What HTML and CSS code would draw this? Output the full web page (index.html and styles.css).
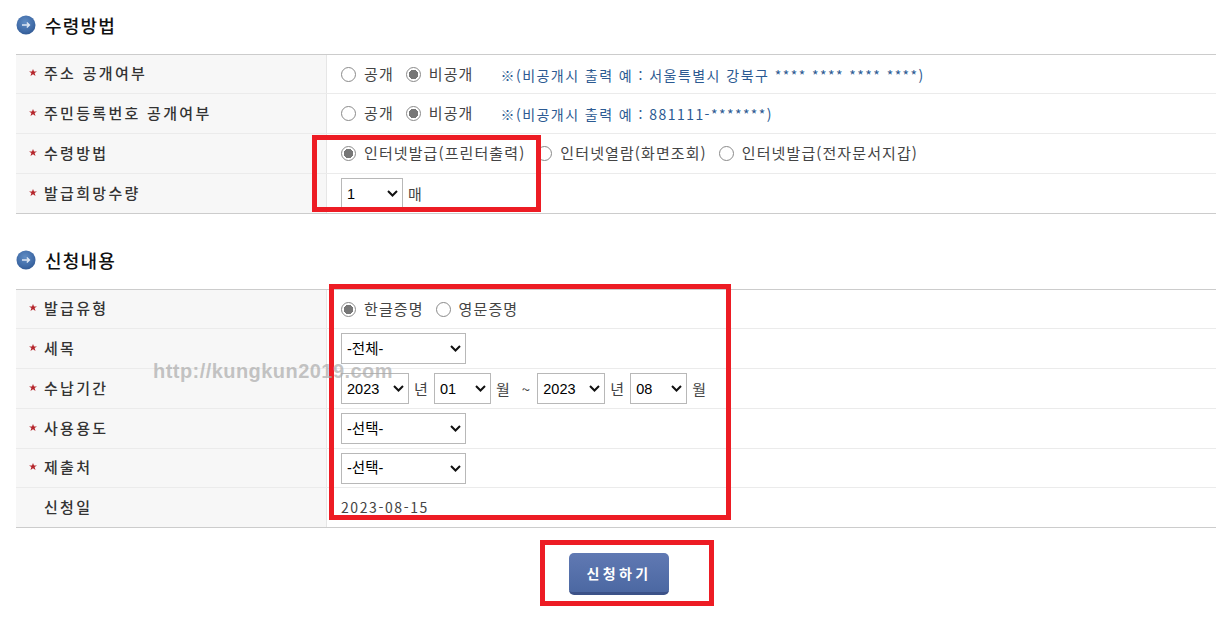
FILE: index.html
```html
<!DOCTYPE html>
<html lang="ko">
<head>
<meta charset="utf-8">
<title>납세증명 신청</title>
<link rel="stylesheet" href="styles.css">
</head>
<body>
<svg class="defs" width="0" height="0" aria-hidden="true">
  <defs>
    <radialGradient id="ball" cx="45%" cy="35%" r="70%">
      <stop offset="0" stop-color="#5f8cc4"/>
      <stop offset="0.7" stop-color="#3f6aa6"/>
      <stop offset="1" stop-color="#2f5690"/>
    </radialGradient>
    <symbol id="bullet" viewBox="0 0 20 20">
      <circle cx="10" cy="10" r="9.5" fill="url(#ball)"/>
      <path d="M6 10H13M10.8 7.6L13.4 10L10.8 12.4" fill="none" stroke="#dfe8f4" stroke-width="1.4"/>
    </symbol>
    <symbol id="star" viewBox="0 0 8 7">
      <path d="M4 0L5 2.4H8L5.6 4.1L6.5 7L4 5.3L1.5 7L2.4 4.1L0 2.4H3Z" fill="#b5252b"/>
    </symbol>
  </defs>
</svg>
<main class="page">
  <section class="section first">
    <h2 class="heading"><svg class="bullet"><use href="#bullet"/></svg>수령방법</h2>
    <div class="table">
      <div class="row short">
        <div class="label"><svg class="star"><use href="#star"/></svg>주소 공개여부</div>
        <div class="value">
          <label class="opt"><input type="radio" name="addr">공개</label>
          <label class="opt"><input type="radio" name="addr" checked>비공개</label>
          <span class="hint">※(비공개시 출력 예 : 서울특별시 강북구 **** **** **** ****)</span>
        </div>
      </div>
      <div class="row">
        <div class="label"><svg class="star"><use href="#star"/></svg>주민등록번호 공개여부</div>
        <div class="value">
          <label class="opt"><input type="radio" name="rrn">공개</label>
          <label class="opt"><input type="radio" name="rrn" checked>비공개</label>
          <span class="hint">※(비공개시 출력 예 : 881111-*******)</span>
        </div>
      </div>
      <div class="row">
        <div class="label"><svg class="star"><use href="#star"/></svg>수령방법</div>
        <div class="value">
          <label class="opt"><input type="radio" name="recv" checked>인터넷발급(프린터출력)</label>
          <label class="opt"><input type="radio" name="recv">인터넷열람(화면조회)</label>
          <label class="opt"><input type="radio" name="recv">인터넷발급(전자문서지갑)</label>
        </div>
      </div>
      <div class="row">
        <div class="label"><svg class="star"><use href="#star"/></svg>발급희망수량</div>
        <div class="value tight">
          <select class="sel qty"><option>1</option></select><span>매</span>
        </div>
      </div>
    </div>
  </section>

  <section class="section second">
    <h2 class="heading"><svg class="bullet"><use href="#bullet"/></svg>신청내용</h2>
    <div class="table">
      <div class="row short">
        <div class="label"><svg class="star"><use href="#star"/></svg>발급유형</div>
        <div class="value">
          <label class="opt"><input type="radio" name="kind" checked>한글증명</label>
          <label class="opt"><input type="radio" name="kind">영문증명</label>
        </div>
      </div>
      <div class="row">
        <div class="label"><svg class="star"><use href="#star"/></svg>세목</div>
        <div class="value"><select class="sel wide"><option>-전체-</option></select></div>
      </div>
      <div class="row">
        <div class="label"><svg class="star"><use href="#star"/></svg>수납기간</div>
        <div class="value tight">
          <select class="sel year"><option>2023</option></select><span>년</span>
          <select class="sel month"><option>01</option></select><span>월</span>
          <span class="tilde">~</span>
          <select class="sel year"><option>2023</option></select><span>년</span>
          <select class="sel month"><option>08</option></select><span>월</span>
        </div>
      </div>
      <div class="row">
        <div class="label"><svg class="star"><use href="#star"/></svg>사용용도</div>
        <div class="value"><select class="sel wide"><option>-선택-</option></select></div>
      </div>
      <div class="row short">
        <div class="label"><svg class="star"><use href="#star"/></svg>제출처</div>
        <div class="value"><select class="sel wide"><option>-선택-</option></select></div>
      </div>
      <div class="row">
        <div class="label nostar">신청일</div>
        <div class="value date">2023-08-15</div>
      </div>
    </div>
  </section>

  <div class="actions"><button class="submit" type="button">신청하기</button></div>

  <div class="mark mark-a"></div>
  <div class="mark mark-b"></div>
  <div class="mark mark-c"></div>
  <div class="watermark">http://kungkun2019.com</div>
</main>
</body>
</html>
```
FILE: styles.css
```css
* { box-sizing: border-box; }
html, body { margin: 0; padding: 0; background: #fff; overflow: hidden; }
body {
  font-family: "Noto Sans CJK KR", "Noto Sans", sans-serif;
  font-size: 14px;
  color: #444;
}
.defs { position: absolute; }
.page { position: relative; width: 1228px; height: 630px; padding: 0 12px 0 16px; }
.section.second { margin-top: 21px; }
.heading {
  display: flex;
  align-items: center;
  height: 54px;
  margin: 0;
  font-size: 18px;
  font-weight: 500;
  letter-spacing: 1.2px;
  color: #111;
  gap: 9px;
  padding-bottom: 5px;
}
.bullet { width: 20px; height: 20px; flex: none; margin-top: 1px; }
.table { border-top: 1px solid #ccc; border-bottom: 1px solid #ccc; }
.row {
  display: grid;
  grid-template-columns: 311px 1fr;
  height: 40px;
  border-bottom: 1px solid #ebebeb;
}
.row.short { height: 39px; }
.row:last-child { height: 39px; border-bottom: 0; }
.label {
  display: flex;
  align-items: center;
  padding: 0 0 3px 13px;
  background: #f7f7f7;
  border-right: 1px solid #e6e6e6;
  font-size: 15px;
  font-weight: 500;
  letter-spacing: 2.3px;
  color: #333;
}
.label.nostar { padding-left: 28px; }
.star { width: 8px; height: 7px; margin-right: 7px; flex: none; }
.value {
  display: flex;
  align-items: center;
  gap: 12px;
  padding-left: 14px;
  font-size: 15px;
  letter-spacing: 1.1px;
  color: #444;
}
.value.tight { gap: 5px; }
.opt { display: flex; align-items: center; gap: 8px; white-space: nowrap; padding-bottom: 2px; }
.opt input {
  appearance: none;
  width: 15px;
  height: 15px;
  margin: 2px 0 0;
  border: 1.3px solid #8a8a8a;
  border-radius: 50%;
  background: #fff;
}
.opt input:checked { background: radial-gradient(circle, #777 0 4.5px, #fff 5px); }
.hint { margin-left: 15px; color: #2c5a92; letter-spacing: 1.45px; padding-top: 1px; font-size: 14px; }
.sel {
  appearance: none;
  height: 31px;
  padding: 0 0 0 5px;
  border: 1px solid #b8b8b8;
  border-radius: 0;
  background: #fff url("data:image/svg+xml,%3Csvg xmlns='http://www.w3.org/2000/svg' width='11' height='7'%3E%3Cpath d='M1 1l4.5 4.5L10 1' fill='none' stroke='%23111' stroke-width='2'/%3E%3C/svg%3E") no-repeat right 4px center;
  font-family: "Liberation Sans", "Noto Sans CJK KR", sans-serif;
  font-size: 14.5px;
  letter-spacing: 0;
  color: #000;
}
.wide { width: 125px; }
.qty { width: 62px; }
.year { width: 68px; }
.month { width: 57px; }
.tilde { margin: 0 1px 0 6px; }
.value.date { font-size: 14px; letter-spacing: 1.6px; padding-bottom: 2px; }
.actions { display: flex; justify-content: center; width: 1200px; padding: 25px 0 0 6px; }
.submit {
  width: 100px;
  height: 42px;
  border: 0;
  border-bottom: 3px solid #3c5288;
  border-radius: 5px;
  background: linear-gradient(#6079b3, #4c68a2);
  color: #fff;
  font: 700 14px "Noto Sans CJK KR", sans-serif;
  letter-spacing: 3.4px;
}
.mark { position: absolute; border: 5px solid #ed1c24; }
.mark-a { left: 312px; top: 135px; width: 229px; height: 77px; }
.mark-b { left: 329px; top: 284px; width: 402px; height: 236px; }
.mark-c { left: 540px; top: 540px; width: 174px; height: 66px; }
.watermark {
  position: absolute;
  left: 153px;
  top: 360px;
  font: 700 20px "Liberation Sans", sans-serif;
  letter-spacing: 0.45px;
  color: rgba(170, 170, 170, 0.7);
}
```
